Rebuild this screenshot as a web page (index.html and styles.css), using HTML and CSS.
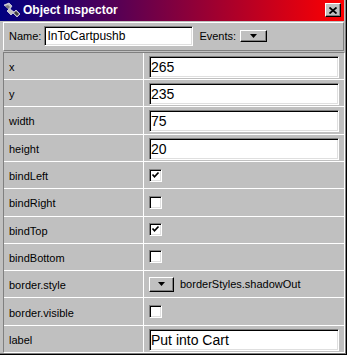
FILE: index.html
```html
<!DOCTYPE HTML>
<html>
<head>
  <meta charset="UTF-8">
  <title>Object Inspector</title>
  <link rel="stylesheet" href="styles.css">
</head>
<body>
  <div class="window">
    <!--标题栏-->
    <div class="titlebar">
      <svg class="app-icon" width="18" height="16" viewBox="0 0 18 16">
        <path d="M1 3 L6 1 L9 4 L7 7 L11 10 L13 8 L17 12 L14 15 L10 11 L8 13 L4 9 L6 7 Z" fill="#c0c0c0" stroke="#fff" stroke-width="0.6"/>
        <path d="M2 4 L5 3 L7 5 L5 7 Z" fill="#808080"/>
        <path d="M11 11 L13 9 L16 12 L14 14 Z" fill="#404040"/>
      </svg>
      <span class="title">Object Inspector</span>
      <span class="close-btn">
        <svg width="8" height="7" viewBox="0 0 8 7"><path d="M0.5 0.5 L7.5 6.5 M7.5 0.5 L0.5 6.5" stroke="#000" stroke-width="1.8"/></svg>
      </span>
    </div>

    <!--名称/事件-->
    <div class="header">
      <span class="field-label">Name:</span>
      <input class="text-box name-box" value="InToCartpushb">
      <span class="field-label events-label">Events:</span>
      <span class="drop-btn events-btn">
        <svg width="7" height="4" viewBox="0 0 7 4"><path d="M0 0 H7 L3.5 4 Z" fill="#000"/></svg>
      </span>
    </div>

    <!--属性列表-->
    <div class="props">
      <div class="prop-name">x</div>
      <div class="prop-value"><input class="text-box value-box" value="265"></div>

      <div class="prop-name">y</div>
      <div class="prop-value"><input class="text-box value-box" value="235"></div>

      <div class="prop-name">width</div>
      <div class="prop-value"><input class="text-box value-box" value="75"></div>

      <div class="prop-name">height</div>
      <div class="prop-value"><input class="text-box value-box" value="20"></div>

      <div class="prop-name">bindLeft</div>
      <div class="prop-value"><span class="check on"><svg width="9" height="9" viewBox="0 0 9 9"><path d="M1.5 3.5 L3.5 5.8 L7.5 1.5" fill="none" stroke="#000" stroke-width="1.7"/></svg></span></div>

      <div class="prop-name">bindRight</div>
      <div class="prop-value"><span class="check"></span></div>

      <div class="prop-name">bindTop</div>
      <div class="prop-value"><span class="check on"><svg width="9" height="9" viewBox="0 0 9 9"><path d="M1.5 3.5 L3.5 5.8 L7.5 1.5" fill="none" stroke="#000" stroke-width="1.7"/></svg></span></div>

      <div class="prop-name">bindBottom</div>
      <div class="prop-value"><span class="check"></span></div>

      <div class="prop-name">border.style</div>
      <div class="prop-value">
        <span class="drop-btn style-btn">
          <svg width="7" height="4" viewBox="0 0 7 4"><path d="M0 0 H7 L3.5 4 Z" fill="#000"/></svg>
        </span>
        <span class="value-text">borderStyles.shadowOut</span>
      </div>

      <div class="prop-name">border.visible</div>
      <div class="prop-value"><span class="check"></span></div>

      <div class="prop-name">label</div>
      <div class="prop-value"><input class="text-box value-box" value="Put into Cart"></div>
    </div>
  </div>
</body>
</html>
```

FILE: styles.css
```css
body{margin:0;font-family:"Liberation Sans",Arial,sans-serif;}

.window{
  display: flex;
  flex-direction: column;
  box-sizing: border-box;
  width: 347px;
  height: 355px;
  padding: 0 1px 1px 0;
  background-color: #c0c0c0;
  border-right: 1px solid #000;
  border-bottom: 1px solid #000;
  box-shadow: inset -1px -1px #808080;
}

/* title bar */
.titlebar{
  display: flex;
  align-items: center;
  height: 21px;
  margin-right: 1px;
  padding-left: 3px;
  background: linear-gradient(90deg, #000080, #ff0000);
}
.app-icon{
  flex: none;
  margin-right: 2px;
}
.title{
  flex: 1;
  color: #fff;
  font-size: 12px;
  font-weight: bold;
}
.close-btn{
  display: flex;
  align-items: center;
  justify-content: center;
  box-sizing: border-box;
  width: 16px;
  height: 14px;
  margin-right: 3px;
  background-color: #c0c0c0;
  border-top: 1px solid #fff;
  border-left: 1px solid #fff;
  border-right: 1px solid #000;
  border-bottom: 1px solid #000;
  box-shadow: inset -1px -1px #808080;
}

/* name row */
.header{
  display: flex;
  align-items: center;
  box-sizing: border-box;
  height: 29px;
  margin: 1px 1px 0 3px;
  padding-left: 5px;
  border-top: 1px solid #fff;
  border-left: 1px solid #fff;
  border-right: 1px solid #808080;
  border-bottom: 1px solid #808080;
  font-size: 11px;
}
.field-label{
  color: #000;
}
.text-box{
  box-sizing: border-box;
  padding: 0 2px;
  background-color: #fff;
  border-top: 1px solid #808080;
  border-left: 1px solid #808080;
  border-right: 1px solid #fff;
  border-bottom: 1px solid #fff;
  box-shadow: inset 1px 1px #000, inset -1px -1px #dfdfdf;
  font-family: "Liberation Sans",Arial,sans-serif;
  color: #000;
  outline: none;
}
.name-box{
  width: 149px;
  height: 20px;
  margin-left: 3px;
  font-size: 12px;
}
.events-label{
  margin-left: 6px;
}
.drop-btn{
  display: flex;
  align-items: center;
  justify-content: center;
  box-sizing: border-box;
  background-color: #c0c0c0;
  border-top: 1px solid #fff;
  border-left: 1px solid #fff;
  border-right: 1px solid #000;
  border-bottom: 1px solid #000;
  box-shadow: inset -1px -1px #808080;
}
.events-btn{
  width: 27px;
  height: 12px;
  margin-left: 4px;
}

/* property grid */
.props{
  display: grid;
  grid-template-columns: 139px 1fr;
  grid-template-rows: repeat(11, 1fr);
  gap: 1px;
  height: 301px;
  margin: 1px 0 0 3px;
  background-color: #fff;
  border-top: 1px solid #808080;
  border-left: 1px solid #808080;
  border-right: 1px solid #fff;
  border-bottom: 1px solid #fff;
}
.prop-name,
.prop-value{
  display: flex;
  align-items: center;
  padding-left: 5px;
  background-color: #c0c0c0;
  font-size: 11px;
}
.prop-name{
  padding-top: 2px;
}
.value-box{
  width: 190px;
  height: 22px;
  margin-top: 2px;
  padding-left: 1px;
  font-size: 14px;
}
.check{
  display: flex;
  align-items: center;
  justify-content: center;
  box-sizing: border-box;
  width: 13px;
  height: 13px;
  background-color: #fff;
  border-top: 1px solid #808080;
  border-left: 1px solid #808080;
  border-right: 1px solid #fff;
  border-bottom: 1px solid #fff;
  box-shadow: inset 1px 1px #000, inset -1px -1px #dfdfdf;
}
.style-btn{
  width: 25px;
  height: 15px;
}
.value-text{
  margin-left: 6px;
}
```
